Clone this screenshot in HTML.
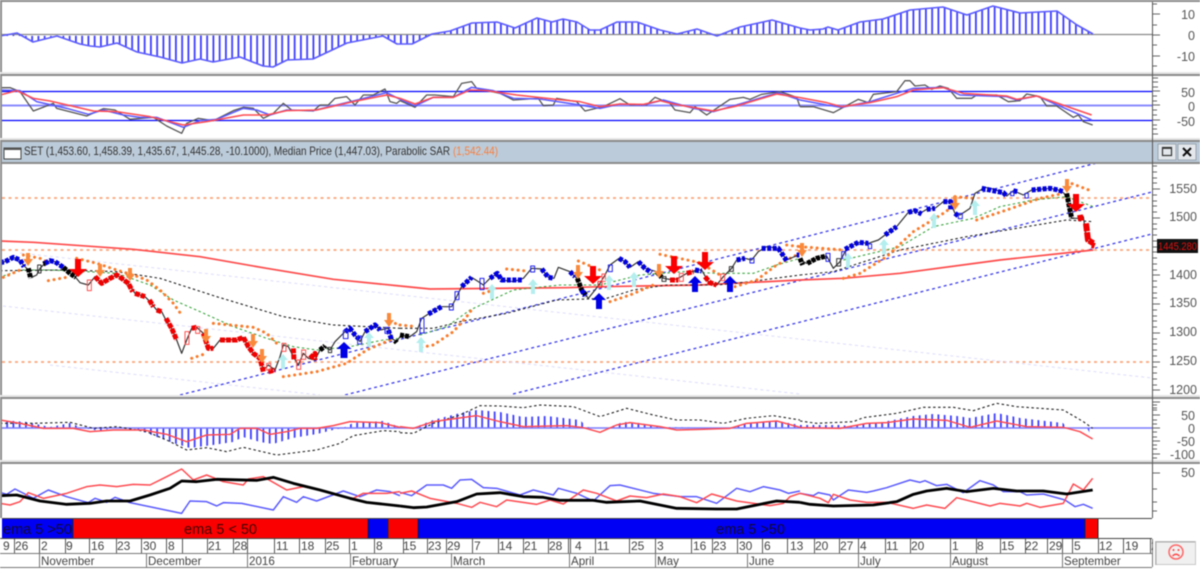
<!DOCTYPE html>
<html><head><meta charset="utf-8"><title>SET chart</title>
<style>
html,body{margin:0;padding:0;background:#fff;width:1200px;height:569px;overflow:hidden}
svg{display:block;filter:blur(.5px)}
text{font-family:"Liberation Sans",sans-serif}
.n *{vector-effect:non-scaling-stroke;fill:none;stroke-linejoin:round}
.hb{stroke:#5a5aff;stroke-width:1.6}
.r{stroke:#ff4a50;stroke-width:1.5}
.b{stroke:#5a5aff;stroke-width:1.5}
.g{stroke:#555;stroke-width:1.3}
.k{stroke:#000;stroke-width:2.8}
.dk{stroke:#222;stroke-width:1.1;stroke-dasharray:2.5 2.5}
.s{stroke:#f97b2b;stroke-width:3;stroke-dasharray:.1 5.6;stroke-linecap:round}
.gr{stroke:#3aa53e;stroke-width:1.1;stroke-dasharray:2.5 2.5}
.red{stroke:#ff4a4a;stroke-width:1.7}
.p{stroke:#333;stroke-width:1.2}
.cb{stroke:#0000e0;stroke-width:5;stroke-dasharray:4 1.5}
.ck{stroke:#000;stroke-width:5;stroke-dasharray:4 1}
.cr{stroke:#f00000;stroke-width:5;stroke-dasharray:5 1}
.ax{font-size:12.5px;fill:#555;text-anchor:end}
.d{font-size:12px;fill:#444}
.m{font-size:11.6px;fill:#444}
</style></head>
<body>
<svg width="1200" height="569" viewBox="0 0 1200 569" xmlns="http://www.w3.org/2000/svg">
<defs>
<pattern id="st" width="6.25" height="10" patternUnits="userSpaceOnUse"><rect width="1.8" height="10" fill="#3c3cff"/></pattern>
<clipPath id="cp"><rect x="0" y="0" width="1152" height="569"/></clipPath>
</defs>
<rect width="1200" height="569" fill="#fff"/>

<!-- panel 1 histogram -->
<polygon fill="url(#st)" points="0,36 17,33 33,42 57,36 80,44 90,46 100,47 117,43 137,52 160,57 182,63 200,59 213,62 240,57 263,66 273,67 287,60 313,59 347,43 383,36 397,44 400,44 412,44 432,34 450,31 472,23 497,22 515,28 537,18 552,22 563,19 577,22 590,30 600,30 617,22 637,22 660,30 677,34 697,29 717,36 740,27 772,20 800,28 810,30 823,29 828,27 838,30 860,22 883,19 910,10 943,7 967,15 993,6 1020,13 1057,11 1077,25 1093,34 1093,34 800,34"/>
<path d="M0 34.500H1152" stroke="#888" stroke-width="1.2"/>
<g class="n"><polyline class="hb" points="0,36 17,33 33,42 57,36 80,44 90,46 100,47 117,43 137,52 160,57 182,63 200,59 213,62 240,57 263,66 273,67 287,60 313,59 347,43 383,36 397,44 400,44 412,44 432,34 450,31 472,23 497,22 515,28 537,18 552,22 563,19 577,22 590,30 600,30 617,22 637,22 660,30 677,34 697,29 717,36 740,27 772,20 800,28 810,30 823,29 828,27 838,30 860,22 883,19 910,10 943,7 967,15 993,6 1020,13 1057,11 1077,25 1093,34"/></g>

<!-- panel 2 -->
<path d="M0 91.500H1152M0 120.500H1152" stroke="#0000ff" stroke-width="1.200"/>
<path d="M0 105.500H1152" stroke="#8a8aff" stroke-width="2"/>
<g class="n" transform="scale(.33333)">
<polyline class="g" points="0,263 30,263 60,275 100,333 160,310 170,325 260,348 310,326 345,330 390,358 460,352 500,378 545,400 560,370 595,355 640,362 700,332 730,322 760,325 790,355 820,340 850,310 875,330 940,333 960,315 985,315 1005,295 1040,290 1065,315 1090,285 1120,285 1155,267 1170,305 1190,310 1200,302"/>
<polyline class="b" points="0,270 60,272 110,305 200,325 265,343 310,330 370,345 420,352 470,352 550,382 600,362 650,358 730,325 770,330 810,345 860,330 940,332 1010,315 1080,298 1160,278 1200,298"/>
<polyline class="r" points="0,285 50,272 100,295 150,303 280,333 350,335 450,350 550,375 620,365 730,345 800,345 860,332 950,330 1060,305 1160,285 1200,295"/>
</g>
<g class="n" transform="translate(400,0) scale(.33333)">
<polyline class="g" points="0,302 45,322 80,285 105,285 160,290 185,250 215,245 230,265 300,280 340,300 415,295 430,317 460,315 470,295 530,305 555,333 610,320 660,296 690,315 740,315 765,292 810,310 825,330 870,338 885,320 920,345 990,298 1030,292 1050,298 1085,283 1140,275 1170,285 1190,292 1200,320"/>
<polyline class="b" points="0,298 45,318 100,292 160,292 215,262 280,272 340,295 420,297 540,315 600,325 660,312 730,315 790,300 880,325 940,335 1020,312 1135,278 1200,300"/>
<polyline class="r" points="0,295 45,312 100,292 160,292 210,270 260,272 350,285 470,298 540,305 600,320 660,312 730,313 780,302 820,312 940,333 1010,318 1130,282 1200,293"/>
</g>
<g class="n" transform="translate(800,0) scale(.33333)">
<polyline class="g" points="0,320 40,320 100,338 175,298 205,308 220,283 290,275 315,242 330,242 345,258 375,255 395,268 420,258 445,265 470,295 515,295 530,285 590,285 625,305 660,302 680,282 720,290 740,318 770,318 820,352 835,345 850,365 878,375"/>
<polyline class="b" points="0,300 80,315 125,322 210,305 290,280 340,265 430,262 480,285 620,290 650,300 710,288 875,360"/>
<polyline class="r" points="0,293 80,308 125,320 210,308 290,290 340,270 430,263 490,280 620,288 650,298 710,288 875,345"/>
</g>

<!-- main panel -->
<g stroke="#fba67c" stroke-width="1.800" stroke-dasharray="3 3.500">
<path d="M2 198H1152M2 250H1152M2 362H1152"/>
</g>
<g stroke="#dcdcfb" stroke-width="1" stroke-dasharray="3 3" fill="none">
<path d="M20 253L1152 378M3 306L800 394M50 365L320 395"/>
</g>
<g clip-path="url(#cp)" stroke="#3a3aee" stroke-width="1.300" stroke-dasharray="3 3" fill="none">
<path d="M180 395L1097 163M345 395L1152 192M513 394L1152 234"/>
</g>

<g class="n" transform="translate(0,190) scale(.33333)">
<polyline class="red" points="0,153 100,157 400,178 600,200 800,235 1000,268 1200,288"/>
<polyline class="dk" points="0,242 200,240 350,245 480,265 650,320 850,380 1000,405 1200,415"/>
<polyline class="gr" points="10,258 60,240 150,240 260,245 350,250 450,285 520,330 600,365 700,410 800,445 880,470 950,480 1050,470 1150,450 1200,445"/>
<path class="s" d="M70 195L120 205L140 215M145 272L210 260M230 205L290 220L350 240L400 255L440 270L480 300L520 340L545 375M640 400L760 412L800 430L840 470M575 505L620 490M850 560L950 545L1040 520L1100 480L1170 450M1170 395L1200 405M10 262L60 240"/>
<polyline class="p" points="0,218 15,215 40,202 60,210 70,225 85,240 95,262 110,255 120,235 135,220 150,212 165,215 190,232 210,250 225,260 240,278 265,285 285,260 305,280 330,265 350,255 365,265 385,280 405,310 435,320 450,335 470,360 485,365 500,395 515,415 530,450 545,490 560,450 575,415 590,412 610,430 625,475 640,475 660,450 680,448 710,450 730,442 745,470 760,490 780,505 790,540 805,525 825,540 840,500 850,465 865,470 880,500 895,525 910,490 925,505 945,510 960,480 975,468 990,480 1005,455 1035,425 1050,415 1065,435 1080,455 1095,425 1125,405 1140,420 1165,415 1175,445 1190,455 1200,440"/>
<path class="cb" d="M0 218L15 215L40 202L60 210L72 230M135 220L150 212L165 215L190 232M1035 425L1050 415L1065 435L1080 450M1095 425L1125 405L1140 420M1165 420L1175 450"/>
<path class="ck" d="M85 235L92 265M130 222L135 220M190 232L210 250L228 262M960 480L975 468M1185 452L1190 458"/>
<path class="cr" d="M285 260L305 280L330 265L350 255L365 265L385 280L398 305M405 310L435 320M448 330L460 350M470 360L485 365M498 385L515 415L530 450M575 415L590 412M610 430L625 475L640 475M660 450L710 450L730 442L745 470L760 490L780 505L790 545M805 545L825 540M880 475L882 510M930 505L945 490L945 510"/>
<rect x="113" y="225" width="10" height="24" style="stroke:#333"/><rect x="985" y="472" width="10" height="16" style="stroke:#333"/>
<rect x="262" y="270" width="12" height="32" style="stroke:#ff5050"/>
<rect x="555" y="425" width="12" height="38" style="stroke:#ff5050"/>
<rect x="587" y="410" width="12" height="20" style="stroke:#ff5050"/>
<rect x="890" y="510" width="12" height="28" style="stroke:#ff5050"/>
<rect x="905" y="480" width="12" height="28" style="stroke:#ff5050"/>
<rect x="846" y="460" width="12" height="24" style="stroke:#ff5050"/>
<rect x="800" y="520" width="12" height="20" style="stroke:#ff5050"/>
<rect x="1030" y="422" width="14" height="24" style="stroke:#2222ee"/>
<rect x="1073" y="438" width="12" height="24" style="stroke:#2222ee"/>
<rect x="1155" y="412" width="12" height="18" style="stroke:#2222ee"/>
</g>

<g class="n" transform="translate(400,190) scale(.33333)">
<polyline class="red" points="0,288 90,297 500,293 600,290 900,285 1200,270"/>
<polyline class="dk" points="0,415 100,415 180,395 320,370 470,330 620,325 700,300 800,285 950,285 1050,275 1200,255"/>
<polyline class="gr" points="60,435 140,410 210,360 340,300 480,285 600,285 720,255 850,245 950,250 1060,250 1130,225 1200,205"/>
<path class="s" d="M0 405L50 410M65 472L100 465L160 425L200 380L218 355M250 310L280 300M320 237L380 243M535 213L600 240M630 335L690 315L760 285M780 193L900 218L960 255M1005 290L1070 270L1130 225L1200 190M1160 165L1200 170"/>
<polyline class="p" points="0,435 30,440 50,425 65,385 85,372 105,358 125,350 155,350 170,320 185,290 215,262 235,275 250,285 270,265 292,250 305,270 340,275 370,265 395,235 425,237 445,262 462,265 475,232 510,245 530,265 545,300 565,325 585,300 600,280 615,255 630,225 657,205 675,215 690,232 715,215 735,235 770,245 790,265 820,270 840,262 860,250 890,240 905,240 925,275 950,285 970,260 995,235 1010,210 1035,205 1055,210 1075,185 1100,170 1135,175 1160,210 1195,195"/>
<path class="ck" d="M0 435L30 440M532 265L545 300L560 318M770 245L785 262"/>
<path class="cb" d="M85 372L125 350M185 290L215 262M270 265L292 250L305 270L370 270M425 237L445 262L462 265M510 245L525 260M545 300L555 318M657 205L675 215L690 232M715 215L735 235L755 248M885 240L905 243M1010 210L1035 205M1085 175L1135 175L1160 212M1190 195L1198 195"/>
<path class="cr" d="M810 270L835 270M860 250L880 245M915 260L930 278L950 285"/>
<rect x="60" y="385" width="12" height="44" style="stroke:#2222ee"/>
<rect x="148" y="342" width="12" height="18" style="stroke:#2222ee"/>
<rect x="165" y="305" width="12" height="24" style="stroke:#2222ee"/>
<rect x="240" y="265" width="12" height="34" style="stroke:#2222ee"/>
<rect x="392" y="228" width="12" height="18" style="stroke:#2222ee"/>
<rect x="625" y="225" width="12" height="20" style="stroke:#2222ee"/>
<rect x="594" y="274" width="12" height="18" style="stroke:#ff2020"/>
<rect x="606" y="252" width="10" height="22" style="stroke:#ff5050"/>
<rect x="838" y="250" width="12" height="24" style="stroke:#ff5050"/>
<rect x="962" y="252" width="12" height="20" style="stroke:#ff5050"/>
<rect x="988" y="230" width="12" height="14" style="stroke:#333"/>
<rect x="786" y="260" width="12" height="14" style="stroke:#333"/>
<rect x="1050" y="205" width="12" height="14" style="stroke:#2222ee"/>
</g>

<g class="n" transform="translate(800,160) scale(.33333)">
<polyline class="red" points="0,360 130,355 300,340 600,300 880,270"/>
<polyline class="dk" points="0,345 100,335 300,270 500,230 650,205 800,180 880,185"/>
<polyline class="gr" points="130,300 300,260 400,200 520,175 600,140 700,120 800,110 880,140"/>
<path class="s" d="M0 260L130 270M130 355L180 340L260 290L340 215L430 160L465 135M465 110L520 115M530 180L620 150L720 115L790 100M800 65L880 95"/>
<polyline class="p" points="0,300 20,310 50,295 80,288 100,325 120,305 140,265 175,247 205,250 235,240 255,225 290,200 325,157 345,152 360,160 380,148 405,145 430,125 450,125 465,160 480,165 510,145 525,100 555,82 585,88 610,100 620,108 640,92 670,105 695,90 750,85 775,90 790,98 800,110 815,175 835,175 850,170 860,240 880,255"/>
<path class="ck" d="M0 295L8 315M22 310L50 295L80 288M800 100L805 125L815 175"/>
<path class="cb" d="M135 268L175 247L205 250M255 225L290 200M325 157L345 152L365 162M380 148L405 145M430 125L452 125L452 150M465 160L475 168M545 85L610 98L620 108M640 92L655 96M695 90L750 85L775 90L790 95"/>
<path class="cr" style="stroke-width:6;stroke-dasharray:8 1" d="M833 175L850 172M858 190L864 240L880 250M876 255L884 258"/>
<rect x="78" y="280" width="12" height="24" style="stroke:#2222ee"/>
<rect x="110" y="296" width="12" height="22" style="stroke:#333"/>
<rect x="125" y="275" width="12" height="20" style="stroke:#2222ee"/>
<rect x="475" y="160" width="12" height="16" style="stroke:#2222ee"/>
<rect x="205" y="252" width="10" height="14" style="stroke:#2222ee"/>
<rect x="632" y="95" width="10" height="12" style="stroke:#2222ee"/>
<rect x="675" y="100" width="10" height="14" style="stroke:#2222ee"/>
</g>

<!-- arrows -->
<g fill="#f98a3c">
<path d="M26 253h4v6h3l-5 7l-5-7h3z"/><path d="M98 264h4v6h3l-5 7l-5-7h3z"/><path d="M128 268h4v6h3l-5 7l-5-7h3z"/><path d="M251 334h4v7h3l-5 7l-5-7h3z"/><path d="M260 349h4v7h3l-5 7l-5-7h3z"/><path d="M204 329h4v7h3l-5 7l-5-7h3z"/><path d="M387 313h4v7h3l-5 7l-5-7h3z"/><path d="M576 265h4v7h3l-5 7l-5-7h3z"/><path d="M657 264h4v7h3l-5 7l-5-7h3z"/><path d="M800 243h4v7h3l-5 7l-5-7h3z"/><path d="M953 196h4v7h3l-5 7l-5-7h3z"/><path d="M1065 179h4v7h3l-5 7l-5-7h3z"/>
</g>
<g fill="#fa0000">
<path d="M75 259h6v10h6l-9 8l-9-8h6z"/><path d="M590 266h6v10h6l-9 8l-9-8h6z"/><path d="M671 256h6v10h6l-9 8l-9-8h6z"/><path d="M702 252h6v10h6l-9 8l-9-8h6z"/><path d="M1073 194h6v10h6l-9 8l-9-8h6z"/>
</g>
<g fill="#0000e6">
<path d="M344 342l7.500 7h-4v9h-7v-9h-4z"/><path d="M599 293l7 7h-4v9h-6v-9h-4z"/><path d="M695 276l7 7h-4v9h-6v-9h-4z"/><path d="M730 276l7 7h-4v9h-6v-9h-4z"/>
</g>
<g fill="#b4eeee">
<path d="M283 354l5 6h-3v9h-4v-9h-3z"/><path d="M369 332l5 6h-3v9h-4v-9h-3z"/><path d="M421 337l5 6h-3v9h-4v-9h-3z"/><path d="M492 284l5 6h-3v9h-4v-9h-3z"/><path d="M533 279l5 6h-3v9h-4v-9h-3z"/><path d="M609 275l5 6h-3v9h-4v-9h-3z"/><path d="M634 272l5 6h-3v9h-4v-9h-3z"/><path d="M848 253l5 6h-3v9h-4v-9h-3z"/><path d="M884 239l5 6h-3v9h-4v-9h-3z"/><path d="M934 213l5 6h-3v9h-4v-9h-3z"/><path d="M975 200l5 6h-3v9h-4v-9h-3z"/>
</g>

<!-- MACD panel -->
<polygon fill="url(#st)" points="0,420 27,422 50,427 70,423 83,428 100,431 117,427 133,428 157,437 173,443 190,448 213,445 233,442 243,437 260,442 273,444 293,438 317,434 333,430 343,428 353,423 383,421 400,427 413,428 433,420 460,413 477,410 500,412 523,417 547,416 580,420 587,427 600,428 607,428 623,422 640,423 660,427 730,428 747,423 777,421 800,425 840,425 850,426 883,422 913,416 933,414 957,416 970,418 997,413 1020,418 1063,423 1067,428 1087,428 1093,439 1093,428 0,428"/>
<path d="M2 428H1152" stroke="#7a7aff" stroke-width="1.600"/>
<g class="n" transform="translate(0,395) scale(.33333)">
<polyline class="dk" points="0,85 100,85 210,82 280,100 350,95 440,110 500,135 560,165 620,158 680,170 730,157 830,180 950,165 1020,145 1060,122 1150,107 1200,110"/>
<polyline class="r" points="0,75 60,85 130,100 220,100 270,110 340,105 430,105 500,118 560,140 620,120 690,118 720,100 770,100 810,118 860,110 900,100 950,100 1000,92 1050,80 1140,83 1200,97"/>
</g>
<g class="n" transform="translate(400,395) scale(.33333)">
<polyline class="dk" points="0,113 40,115 100,85 180,60 240,32 300,33 370,38 420,30 520,35 600,65 680,40 760,60 830,75 900,75 970,85 1040,70 1120,62 1200,75"/>
<polyline class="r" points="0,95 40,100 100,80 230,62 300,80 370,95 500,92 550,98 600,112 650,90 690,83 780,95 830,105 900,103 990,100 1040,85 1130,78 1200,97"/>
</g>
<g class="n" transform="translate(800,395) scale(.33333)">
<polyline class="dk" points="0,78 50,85 160,80 190,68 290,55 370,37 460,37 520,47 590,25 650,35 790,45 850,80 878,100"/>
<polyline class="r" points="0,98 120,100 200,85 260,83 340,72 440,76 510,97 590,78 680,95 790,97 840,110 878,132"/>
</g>

<!-- Panel 5 -->
<g class="n" transform="translate(0,395) scale(.33333)">
<polyline class="b" points="0,292 20,298 45,282 100,310 145,285 200,305 265,323 285,310 320,322 345,307 390,323 545,355 570,318 620,320 650,333 670,323 725,325 820,345 850,305 890,322 910,305 950,318 1030,288 1080,305 1130,285 1170,290 1200,302"/>
<polyline class="r" points="0,325 30,330 60,320 85,293 130,310 200,295 260,275 300,270 350,275 400,268 450,270 500,245 545,222 580,255 620,240 670,260 730,270 745,252 790,245 860,285 910,275 950,283 1000,298 1060,310 1090,295 1160,295 1200,290"/>
<polyline class="k" points="0,302 50,300 120,318 200,328 270,325 320,318 390,318 450,300 510,280 545,258 590,260 650,253 770,256 820,247 880,265 960,285 1050,310 1100,322 1200,333"/>
</g>
<g class="n" transform="translate(400,395) scale(.33333)">
<polyline class="b" points="0,292 35,302 80,270 130,270 155,280 180,255 215,253 250,278 290,280 360,300 400,285 460,300 475,280 530,295 580,318 630,272 660,270 760,295 840,305 890,305 950,325 1010,280 1050,290 1090,275 1140,285 1165,295 1200,288"/>
<polyline class="r" points="0,295 35,288 90,310 170,325 215,337 240,322 290,335 320,315 410,328 450,315 490,327 550,285 590,295 650,318 690,303 740,308 790,297 840,305 890,323 935,297 1010,318 1110,332 1150,325 1170,305 1200,295"/>
<polyline class="k" points="0,333 40,338 80,336 170,320 230,297 300,293 370,305 430,307 480,316 580,316 620,322 720,318 830,340 950,342 1010,342 1130,318 1200,322"/>
</g>
<g class="n" transform="translate(800,395) scale(.33333)">
<polyline class="b" points="0,295 40,302 55,293 90,300 100,315 145,285 200,292 220,288 260,278 330,255 360,262 375,257 410,272 440,268 490,293 540,257 580,270 610,290 660,290 680,300 730,297 795,315 825,335 850,328 878,340"/>
<polyline class="r" points="0,295 60,310 85,323 100,298 150,315 200,322 260,322 340,340 380,330 435,340 470,308 570,333 600,325 660,333 680,325 720,337 790,325 820,267 850,285 878,250"/>
<polyline class="k" points="0,322 30,328 100,333 220,330 290,320 340,298 380,288 440,280 500,290 580,280 650,288 730,288 800,297 878,285"/>
</g>

<!-- frame lines -->
<g fill="#8c8c8c">
<rect x="0" y="0" width="1200" height="2"/>
<rect x="0" y="0" width="2" height="518"/>
<rect x="0" y="74" width="1200" height="2"/>
<rect x="0" y="140" width="1200" height="2"/>
<rect x="0" y="162" width="1200" height="2"/>
<rect x="0" y="397" width="1200" height="2"/>
<rect x="0" y="462" width="1200" height="2"/>
</g>
<g fill="#e6e6e6">
<rect x="0" y="72" width="1200" height="2"/>
<rect x="0" y="138" width="1200" height="2"/>
<rect x="0" y="395" width="1200" height="2"/>
<rect x="0" y="460" width="1200" height="2"/>
</g>

<!-- title bar -->
<rect x="2" y="142" width="1198" height="20" fill="#bccbd9"/>
<rect x="4" y="148" width="17" height="11" fill="#fff" stroke="#444" stroke-width="1"/>
<rect x="4" y="148" width="17" height="2" fill="#555"/>
<text x="24" y="155" font-size="12" fill="#333" textLength="426" lengthAdjust="spacingAndGlyphs">SET (1,453.60, 1,458.39, 1,435.67, 1,445.28, -10.1000), Median Price (1,447.03), Parabolic SAR</text>
<text x="453" y="155" font-size="12" fill="#f98040" textLength="45" lengthAdjust="spacingAndGlyphs">(1,542.44)</text>
<rect x="1158" y="144" width="18" height="16" fill="#e4e8ec" stroke="#9aa5b0"/>
<rect x="1178" y="144" width="18" height="16" fill="#e4e8ec" stroke="#9aa5b0"/>
<rect x="1162.500" y="147.500" width="9" height="8" fill="none" stroke="#333" stroke-width="1.200"/>
<path d="M1162.500 148H1171.500" stroke="#333" stroke-width="1.800"/>
<path d="M1183 148L1191 156M1191 148L1183 156" stroke="#111" stroke-width="2"/>

<!-- right axis -->
<path d="M1152.500 2V518" stroke="#555" stroke-width="1"/>
<g stroke="#666" stroke-width="1" fill="none">
<path d="M1153 4H1157M1153 14H1160M1153 25H1157M1153 35H1160M1153 45H1157M1153 56H1160M1153 66H1157"/>
<path d="M1153 78H1158M1153 82H1158M1153 87H1158M1153 91H1160M1153 96H1157M1153 101H1157M1153 105H1160M1153 110H1157M1153 115H1157M1153 120H1160M1153 125H1157M1153 129H1157M1153 134H1158"/>
<path d="M1153 166H1157M1153 172H1157M1153 178H1157M1153 183H1157M1153 189H1160M1153 195H1157M1153 201H1157M1153 206H1157M1153 212H1157M1153 218H1160M1153 224H1157M1153 229H1157M1153 235H1157M1153 241H1157M1153 247H1160M1153 252H1157M1153 258H1157M1153 264H1157M1153 270H1157M1153 275H1160M1153 281H1157M1153 287H1157M1153 293H1157M1153 298H1157M1153 304H1160M1153 310H1157M1153 316H1157M1153 321H1157M1153 327H1157M1153 333H1160M1153 339H1157M1153 344H1157M1153 350H1157M1153 356H1157M1153 362H1160M1153 367H1157M1153 373H1157M1153 379H1157M1153 385H1157M1153 390H1160"/>
<path d="M1153 402H1160M1153 405H1157M1153 408H1157M1153 410H1157M1153 415H1160M1153 420H1157M1153 424H1157M1153 428H1160M1153 432H1157M1153 437H1157M1153 441H1160M1153 445H1157M1153 449H1157M1153 454H1160M1153 458H1157"/>
<path d="M1153 473H1160M1153 489H1157M1153 502H1157M1153 511H1157"/>
</g>
<text class="ax" x="1195" y="19">10</text>
<text class="ax" x="1195" y="40">0</text>
<text class="ax" x="1195" y="61">-10</text>
<text class="ax" x="1195" y="97">50</text>
<text class="ax" x="1195" y="111">0</text>
<text class="ax" x="1195" y="126">-50</text>
<text class="ax" x="1197" y="193">1550</text>
<text class="ax" x="1197" y="221">1500</text>
<text class="ax" x="1197" y="279">1400</text>
<text class="ax" x="1197" y="307">1350</text>
<text class="ax" x="1197" y="336">1300</text>
<text class="ax" x="1197" y="365">1250</text>
<text class="ax" x="1197" y="394">1200</text>
<text class="ax" x="1195" y="420">50</text>
<text class="ax" x="1195" y="433">0</text>
<text class="ax" x="1195" y="446">-50</text>
<text class="ax" x="1195" y="459">-100</text>
<text class="ax" x="1195" y="477">50</text>
<rect x="1157" y="239" width="41" height="14" fill="#111"/>
<text x="1158" y="250" font-size="11" fill="#e01010" textLength="39" lengthAdjust="spacingAndGlyphs">1445.280</text>

<!-- signal bar -->
<path d="M2 518.500H1152M0 538.500H1152" stroke="#444" stroke-width="1"/>
<rect x="2" y="519" width="71" height="19" fill="#0000f5"/>
<rect x="73" y="519" width="295" height="19" fill="#fb0000"/>
<rect x="368" y="519" width="20" height="19" fill="#0000f5"/>
<rect x="388" y="519" width="30" height="19" fill="#fb0000"/>
<rect x="418" y="519" width="667" height="19" fill="#0000f5"/>
<rect x="1085" y="519" width="13" height="19" fill="#fb0000"/>
<path d="M73 519V538M368 519V538M388 519V538M418 519V538M1085 519V538M1098 519V538" stroke="#222" stroke-width="1"/>
<text x="3" y="534" font-size="14.500" fill="#120a30">ema 5 &gt;50</text>
<text x="184" y="534" font-size="14.500" fill="#400">ema 5 &lt; 50</text>
<text x="716" y="534" font-size="14.500" fill="#120a30">ema 5 &gt;50</text>

<!-- date row -->
<path d="M0 553.500H1152M0 567.500H1152" stroke="#777" stroke-width="1"/>
<path d="M14.500 539V553M39.500 539V553M65.500 539V553M89.500 539V553M116.500 539V553M141.500 539V553M166.500 539V553M182.500 539V553M207.500 539V553M233.500 539V553M247.500 539V553M274.500 539V553M299.500 539V553M325.500 539V553M349.500 539V553M374.500 539V553M403.500 539V553M427.500 539V553M446.500 539V553M472.500 539V553M498.500 539V553M523.500 539V553M548.500 539V553M568.500 539V553M570.500 539V553M595.500 539V553M629.500 539V553M655.500 539V553M691.500 539V553M712.500 539V553M737.500 539V553M762.500 539V553M787.500 539V553M814.500 539V553M839.500 539V553M858.500 539V553M885.500 539V553M910.500 539V553M950.500 539V553M976.500 539V553M1000.500 539V553M1025.500 539V553M1047.500 539V553M1062.500 539V553M1072.500 539V553M1098.500 539V553M1123.500 539V553M1150.500 539V553" stroke="#555" stroke-width="1"/>
<path d="M39.500 553V567M146.500 553V567M247.500 553V567M350.500 553V567M451.500 553V567M569.500 553V567M655.500 553V567M747.500 553V567M858.500 553V567M950.500 553V567M1062.500 553V567M1152.500 539V567" stroke="#777" stroke-width="1"/>
<text class="d" x="3" y="550">9</text><text class="d" x="15" y="550">26</text><text class="d" x="41" y="550">2</text><text class="d" x="66" y="550">9</text><text class="d" x="91" y="550">16</text><text class="d" x="117" y="550">23</text><text class="d" x="143" y="550">30</text><text class="d" x="168" y="550">8</text><text class="d" x="208" y="550">21</text><text class="d" x="234" y="550">28</text><text class="d" x="276" y="550">11</text><text class="d" x="301" y="550">18</text><text class="d" x="326" y="550">25</text><text class="d" x="351" y="550">1</text><text class="d" x="376" y="550">8</text><text class="d" x="403" y="550">15</text><text class="d" x="428" y="550">23</text><text class="d" x="447" y="550">29</text><text class="d" x="474" y="550">7</text><text class="d" x="499" y="550">14</text><text class="d" x="524" y="550">21</text><text class="d" x="549" y="550">28</text><text class="d" x="575" y="550">4</text><text class="d" x="597" y="550">11</text><text class="d" x="631" y="550">25</text><text class="d" x="657" y="550">3</text><text class="d" x="693" y="550">16</text><text class="d" x="713" y="550">23</text><text class="d" x="739" y="550">30</text><text class="d" x="764" y="550">6</text><text class="d" x="790" y="550">13</text><text class="d" x="815" y="550">20</text><text class="d" x="840" y="550">27</text><text class="d" x="860" y="550">4</text><text class="d" x="886" y="550">11</text><text class="d" x="911" y="550">20</text><text class="d" x="952" y="550">1</text><text class="d" x="977" y="550">8</text><text class="d" x="1001" y="550">15</text><text class="d" x="1025" y="550">22</text><text class="d" x="1049" y="550">29</text><text class="d" x="1074" y="550">5</text><text class="d" x="1099" y="550">12</text><text class="d" x="1125" y="550">19</text><text class="d" x="1151" y="550">2</text>
<text class="m" x="41" y="565">November</text><text class="m" x="148" y="565">December</text><text class="m" x="249" y="565">2016</text><text class="m" x="352" y="565">February</text><text class="m" x="453" y="565">March</text><text class="m" x="571" y="565">April</text><text class="m" x="657" y="565">May</text><text class="m" x="749" y="565">June</text><text class="m" x="860" y="565">July</text><text class="m" x="952" y="565">August</text><text class="m" x="1064" y="565">September</text>

<!-- status box -->
<rect x="1153" y="539" width="47" height="30" fill="#fff"/>
<rect x="1155.500" y="541.500" width="40" height="23" fill="#f0f0f0" stroke="#c8c8c8"/>
<path d="M1156 565V542H1195" fill="none" stroke="#aaa" stroke-width="1"/>
<circle cx="1176" cy="552" r="7" fill="none" stroke="#f66" stroke-width="1.500"/>
<circle cx="1173.500" cy="550" r="1" fill="#f44"/><circle cx="1178.500" cy="550" r="1" fill="#f44"/>
<path d="M1172.500 556Q1176 552.500 1179.500 556" fill="none" stroke="#f44" stroke-width="1.300"/>
</svg>
</body></html>
